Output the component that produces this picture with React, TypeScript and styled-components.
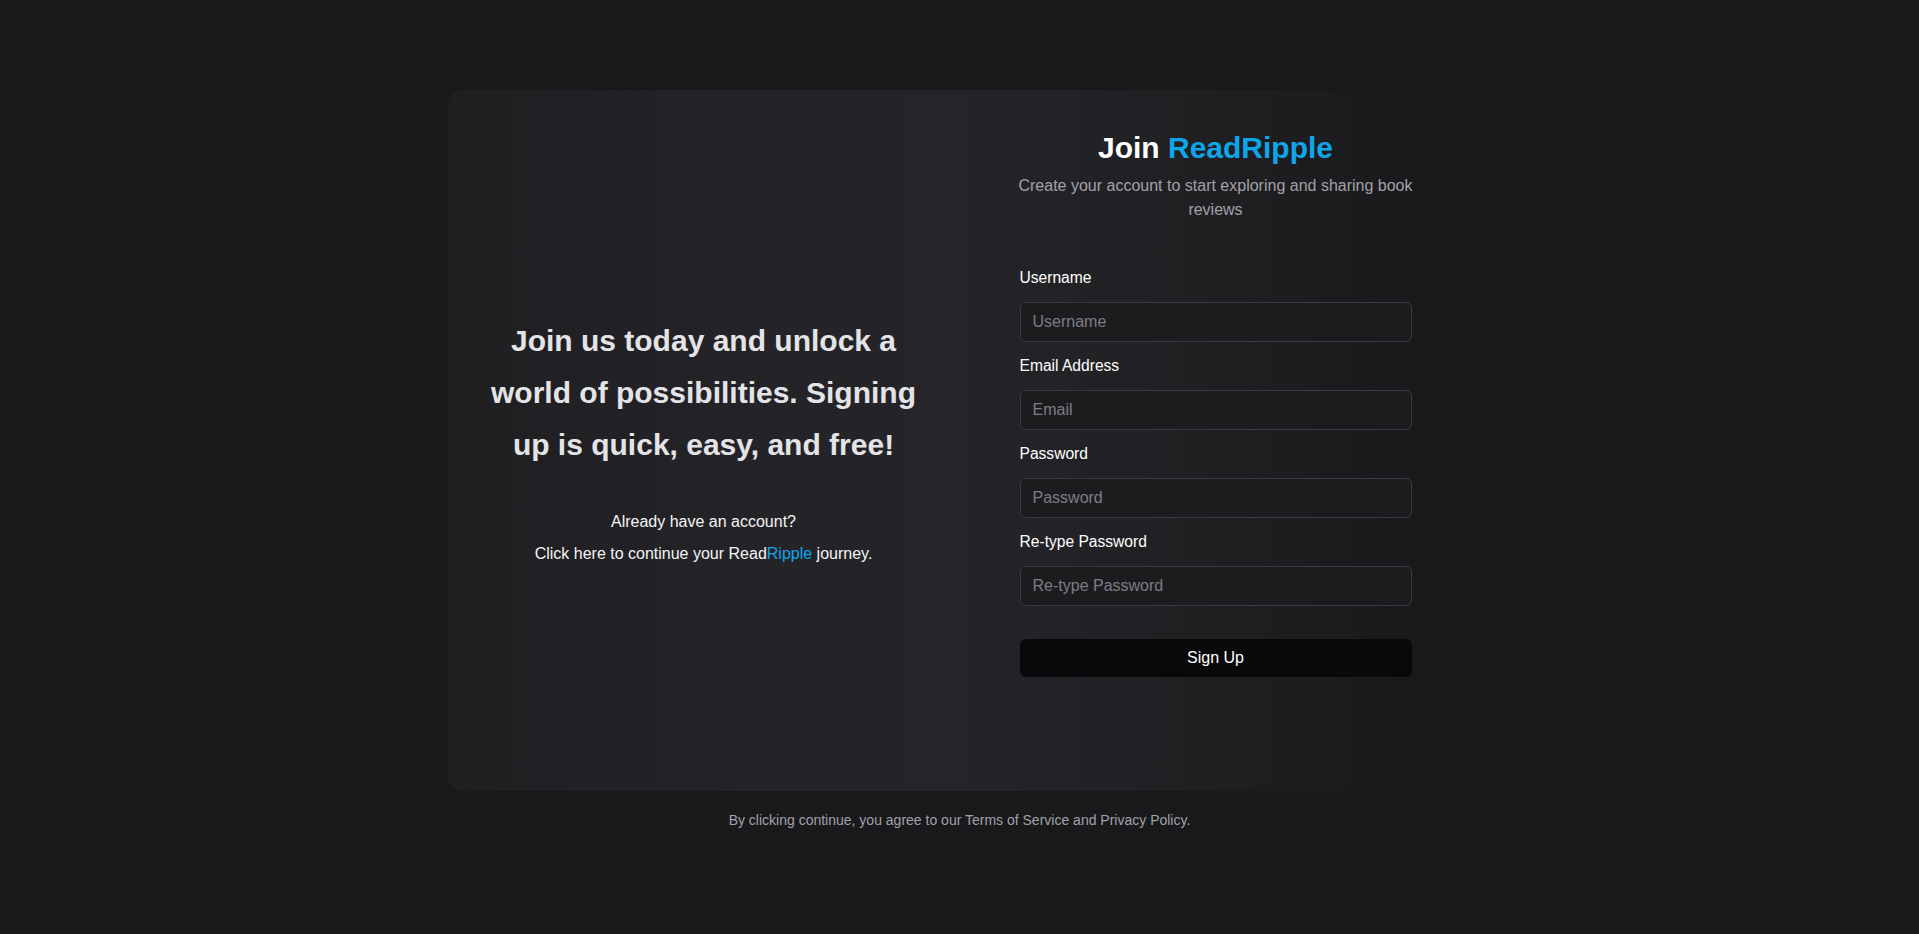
import React from "react";
import styled, { createGlobalStyle } from "styled-components";

const Global = createGlobalStyle`
  html, body { margin: 0; padding: 0; background: #19191b; }
  body { font-family: "Liberation Sans", Arial, sans-serif; color: #fafafa; }
  * { box-sizing: border-box; }
`;

const Page = styled.div`
  min-height: 100vh;
  display: flex;
  flex-direction: column;
  align-items: center;
  justify-content: center;
  padding-top: 2px;
`;

const Card = styled.div`
  width: 1024px;
  height: 701px;
  border-radius: 14px;
  background: linear-gradient(to right, #1f1f22 0%, #242428 30%, #252529 50%, #1f1f22 76%, #19191b 96%);
  display: grid;
  grid-template-columns: 1fr 1fr;
`;

const LeftCol = styled.div`
  display: flex;
  flex-direction: column;
  align-items: center;
  justify-content: center;
  padding: 0 32px;
  text-align: center;
`;

const Headline = styled.h2`
  margin: 0;
  font-size: 30px;
  line-height: 52px;
  font-weight: 700;
  color: #e4e4e7;
`;

const LoginText = styled.div`
  margin-top: 39px;
  display: flex;
  flex-direction: column;
  gap: 8px;
`;

const Line = styled.p`
  margin: 0;
  font-size: 16px;
  line-height: 24px;
  color: #f4f4f5;
`;

const Accent = styled.span`
  color: #0ea5e9;
`;

const RightCol = styled.div`
  display: flex;
  flex-direction: column;
  align-items: center;
  padding-top: 40px;
`;

const FormBox = styled.div`
  width: 392px;
  display: flex;
  flex-direction: column;
`;

const Title = styled.h1`
  margin: 0;
  text-align: center;
  font-size: 30px;
  line-height: 36px;
  font-weight: 700;
  color: #ffffff;
`;

const Subtitle = styled.p`
  margin: 8px -8px 0;
  text-align: center;
  font-size: 16px;
  line-height: 24px;
  color: #a1a1aa;
`;

const Form = styled.form`
  margin-top: 32px;
  display: flex;
  flex-direction: column;
`;

const Label = styled.label`
  display: block;
  margin-top: 12px;
  margin-bottom: 12px;
  font-size: 15.6px;
  line-height: 24px;
  color: #ffffff;
`;

const Input = styled.input`
  width: 100%;
  height: 40px;
  padding: 0 12px;
  border: 1px solid #3a3a40;
  border-radius: 6px;
  background: #1c1c1f;
  color: #fafafa;
  font-family: "Liberation Sans", Arial, sans-serif;
  font-size: 16px;
  outline: none;
  &::placeholder { color: #7c7c84; }
`;

const Button = styled.button`
  margin-top: 33px;
  height: 38px;
  width: 100%;
  border: none;
  border-radius: 6px;
  background: #09090b;
  color: #ffffff;
  font-family: "Liberation Sans", Arial, sans-serif;
  font-size: 16px;
  cursor: pointer;
`;

const Footer = styled.p`
  margin: 19px 0 16px;
  font-size: 14px;
  line-height: 20px;
  color: #a1a1aa;
  text-align: center;
`;

const fields = [
  { label: "Username", placeholder: "Username", type: "text" },
  { label: "Email Address", placeholder: "Email", type: "email" },
  { label: "Password", placeholder: "Password", type: "password" },
  { label: "Re-type Password", placeholder: "Re-type Password", type: "password" },
];

export default function App() {
  return (
    <>
      <Global />
      <Page>
        <Card>
          <LeftCol>
            <Headline>
              Join us today and unlock a world of possibilities. Signing up is quick, easy, and free!
            </Headline>
            <LoginText>
              <Line>Already have an account?</Line>
              <Line>
                Click here to continue your Read<Accent>Ripple</Accent> journey.
              </Line>
            </LoginText>
          </LeftCol>
          <RightCol>
            <FormBox>
              <Title>
                Join <Accent>ReadRipple</Accent>
              </Title>
              <Subtitle>Create your account to start exploring and sharing book reviews</Subtitle>
              <Form onSubmit={(e) => e.preventDefault()}>
                {fields.map((f) => (
                  <React.Fragment key={f.label}>
                    <Label>{f.label}</Label>
                    <Input type={f.type} placeholder={f.placeholder} />
                  </React.Fragment>
                ))}
                <Button type="submit">Sign Up</Button>
              </Form>
            </FormBox>
          </RightCol>
        </Card>
        <Footer>By clicking continue, you agree to our Terms of Service and Privacy Policy.</Footer>
      </Page>
    </>
  );
}
